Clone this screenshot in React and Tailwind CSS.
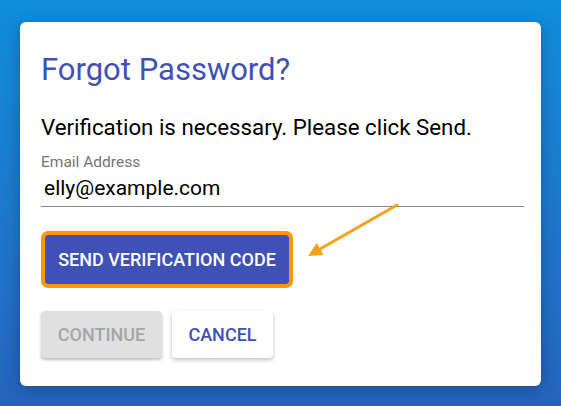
export default function App() {
  return (
    <div className="min-h-[406px] w-full bg-gradient-to-b from-[#0d8edb] to-[#2563be] pt-[22px] pl-[20px] font-['Roboto',sans-serif]">
      <div className="relative h-[364px] w-[521px] rounded-md bg-white px-[21px] pt-[29px] shadow-[0_4px_16px_rgba(0,0,0,0.25)]">
        <h1 className="text-[31px] leading-[38px] text-[#3f51b5]">Forgot Password?</h1>
        <p className="mt-[24px] text-[22.3px] leading-[28px] text-black">
          Verification is necessary. Please click Send.
        </p>
        <div className="mt-[12px] w-[483px]">
          <label className="block text-[15.5px] leading-[18px] text-[#757575]">Email Address</label>
          <div className="border-b border-[#8a8a8a] pb-[6px] pl-[3px] pt-[5px] text-[21px] leading-[24px] text-black">
            elly@example.com
          </div>
        </div>
        <div className="mt-[24px] inline-block rounded-[7px] border-[4px] border-[#ff9800]">
          <button
            type="button"
            className="h-[49px] w-[244px] rounded-[3px] bg-[#3f51b5] text-[18px] font-medium uppercase text-white"
          >
            Send Verification Code
          </button>
        </div>
        <div className="mt-[23px] flex gap-[10px]">
          <button
            type="button"
            className="h-[47px] w-[121px] rounded-[4px] bg-[#e0e0e0] text-[18px] font-medium uppercase text-[#a6a6a6] shadow-[0_2px_3px_rgba(0,0,0,0.25)]"
          >
            Continue
          </button>
          <button
            type="button"
            className="h-[47px] w-[101px] rounded-[4px] bg-white text-[18px] font-medium uppercase text-[#3f51b5] shadow-[0_2px_4px_rgba(0,0,0,0.25)]"
          >
            Cancel
          </button>
        </div>
        <svg className="absolute left-[280px] top-[170px]" width="110" height="80" viewBox="0 0 110 80">
          <line x1="97" y1="13" x2="20" y2="57" stroke="#f7a11a" strokeWidth="3" strokeLinecap="round" />
          <polygon points="8,64 16.7,51 23.6,63.1" fill="#f7a11a" />
        </svg>
      </div>
    </div>
  )
}
